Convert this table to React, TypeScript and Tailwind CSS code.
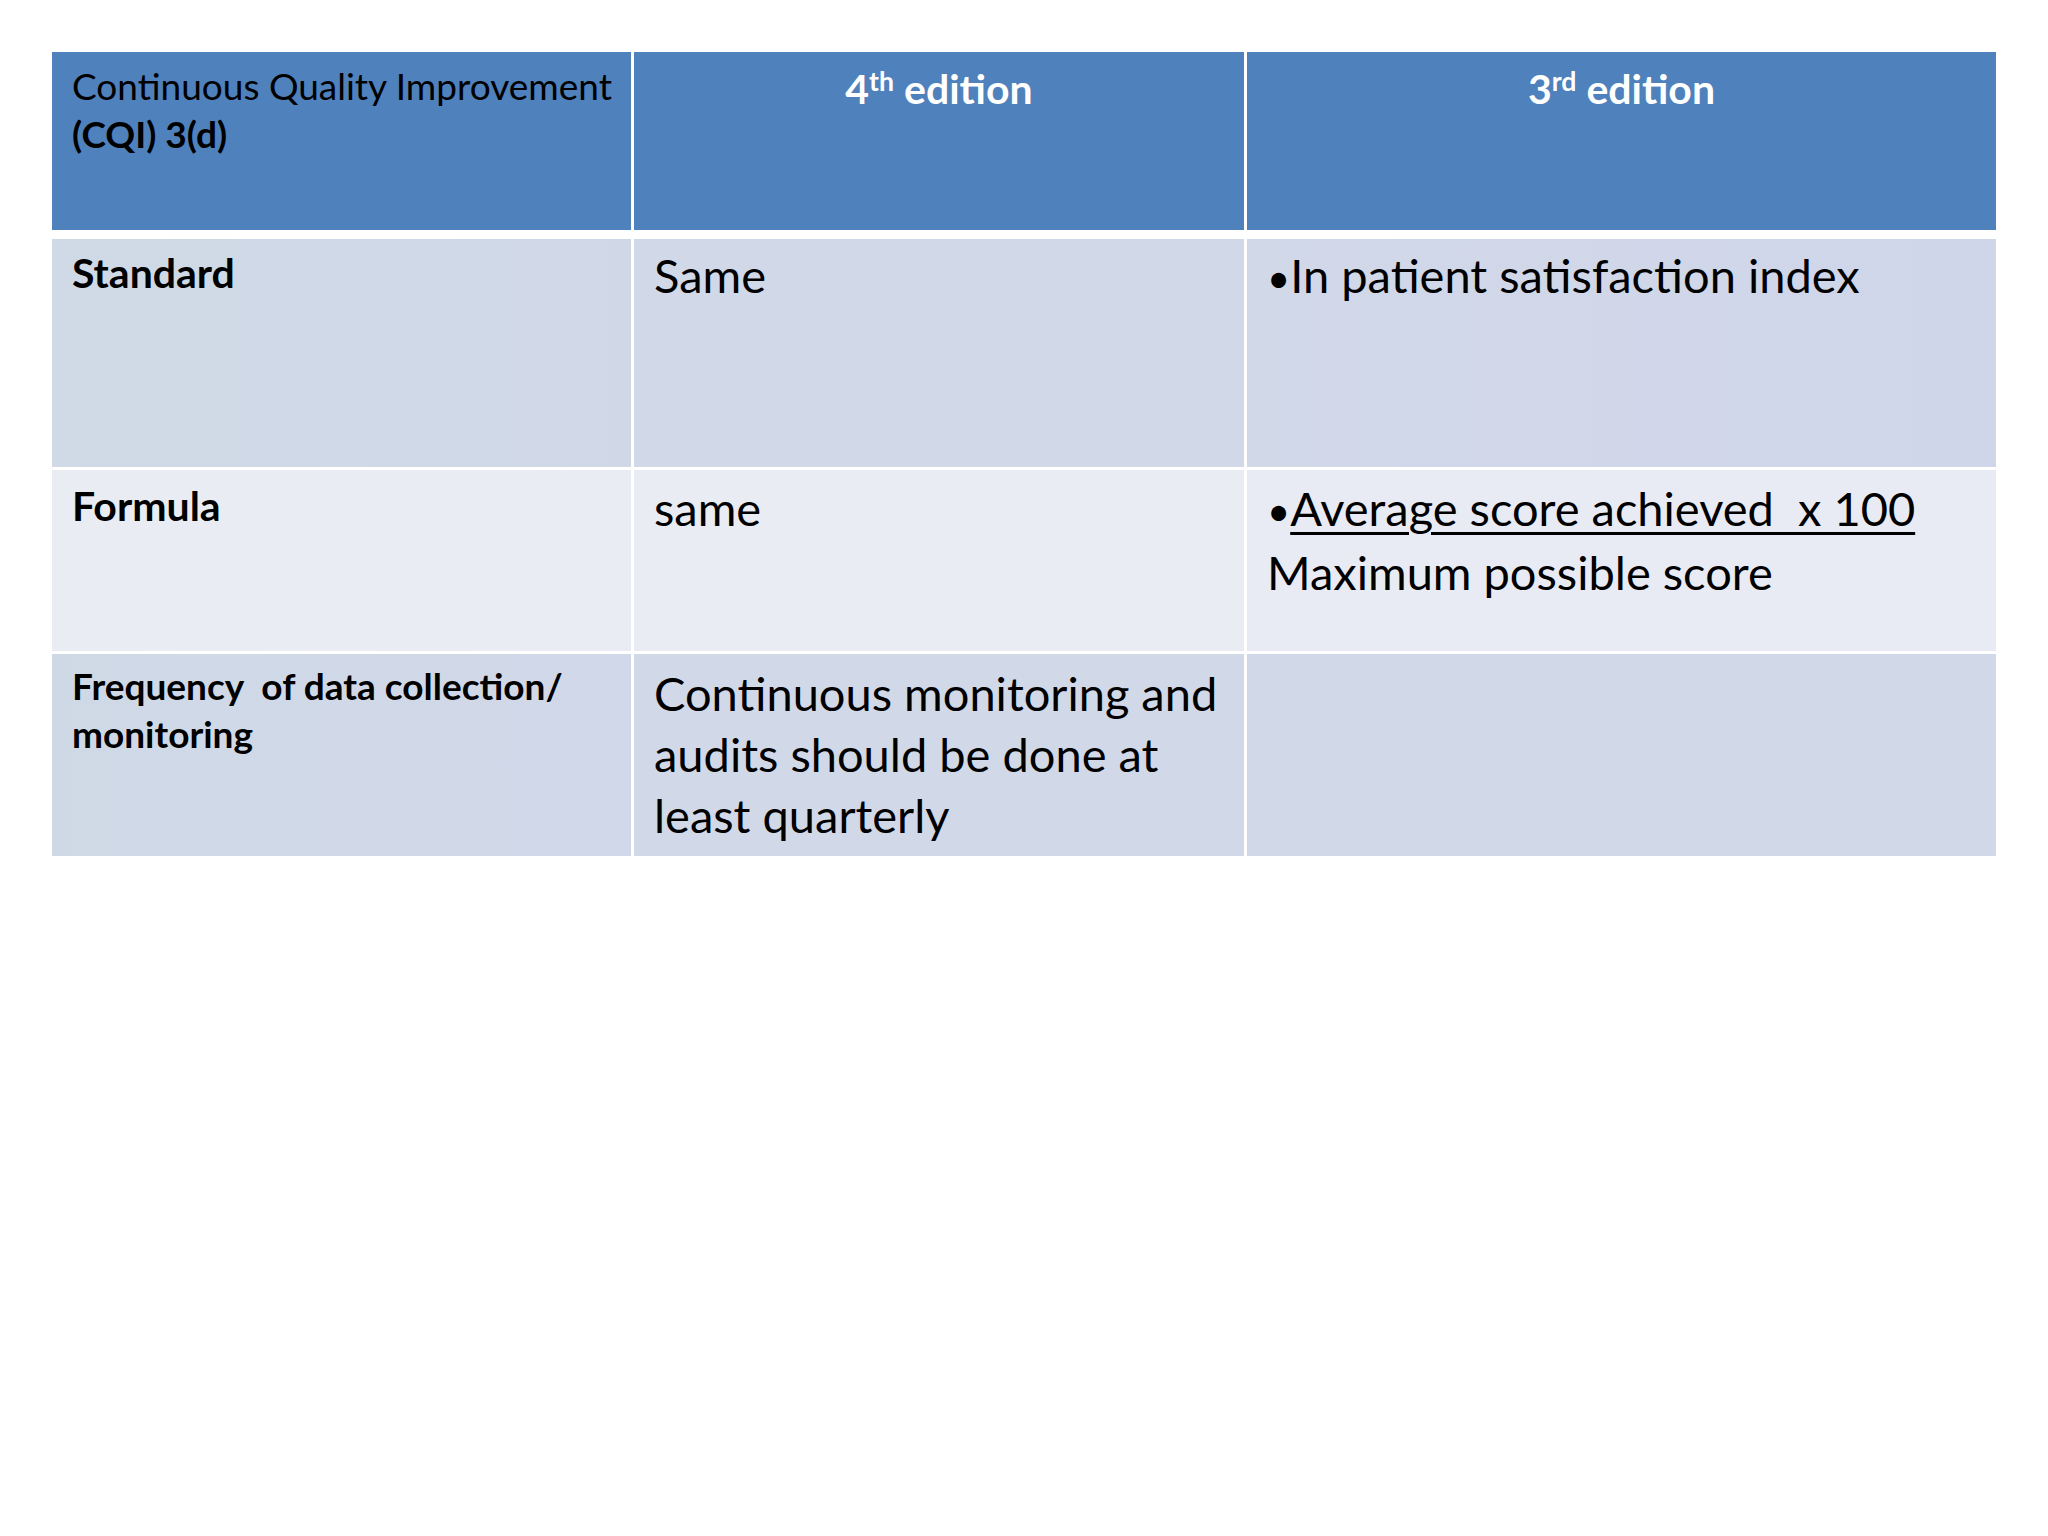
export default function App() {
  return (
    <div className="w-[2048px] h-[1536px] bg-white font-['Lato',sans-serif] text-black">
      <div className="pt-[52px] pl-[52px]">
        <div className="flex w-[1944px] flex-col">
          {/* Header row */}
          <div className="mb-[9px] grid h-[178px] grid-cols-[579px_610px_749px] gap-x-[3px]">
            <div className="bg-[#4f81bd] pl-[20px] pt-[10px] text-[37px] leading-[48px] whitespace-nowrap">
              <p>Continuous Quality Improvement</p>
              <p className="font-bold">(CQI) 3(d)</p>
            </div>
            <div className="bg-[#4f81bd] px-[20px] pt-[9px] text-center text-[41px] font-bold leading-[55px] text-white">
              4<sup className="text-[65%]">th</sup> edition
            </div>
            <div className="bg-[#4f81bd] px-[20px] pt-[9px] text-center text-[41px] font-bold leading-[55px] text-white">
              3<sup className="text-[65%]">rd</sup> edition
            </div>
          </div>

          {/* Standard */}
          <div className="mb-[3px] grid h-[228px] grid-cols-[579px_610px_749px] gap-x-[3px]">
            <div className="bg-gradient-to-r from-[#cfdae6] to-[#d0d8e8] px-[20px] pt-[6px] text-[41px] font-bold leading-[55px]">
              Standard
            </div>
            <div className="bg-[#d1d8e8] px-[20px] pt-[6px] text-[47px] leading-[61px]">Same</div>
            <div className="bg-gradient-to-r from-[#d1d8e8] to-[#d0d6ea] px-[20px] pt-[6px] text-[47px] leading-[61px]">
              <span className="text-[40px]">•</span>In patient satisfaction index
            </div>
          </div>

          {/* Formula */}
          <div className="mb-[3px] grid h-[181px] grid-cols-[579px_610px_749px] gap-x-[3px]">
            <div className="bg-[#e9edf3] px-[20px] pt-[8px] text-[41px] font-bold leading-[55px]">Formula</div>
            <div className="bg-[#e9ecf3] px-[20px] pt-[8px] text-[47px] leading-[61px]">same</div>
            <div className="bg-[#e9ebf4] px-[20px] pt-[8px] text-[47px] leading-[61px] whitespace-pre">
              <p>
                <span className="text-[40px]">•</span>
                <span className="underline decoration-[3px] underline-offset-[6px]">Average score achieved  x 100</span>
              </p>
              <p>Maximum possible score</p>
            </div>
          </div>

          {/* Frequency */}
          <div className="grid h-[202px] grid-cols-[579px_610px_749px] gap-x-[3px]">
            <div className="bg-gradient-to-r from-[#cfd9e6] to-[#d1d8e9] px-[20px] pt-[8px] text-[37px] font-bold leading-[48px] whitespace-pre">
              <p>Frequency  of data collection/</p>
              <p>monitoring</p>
            </div>
            <div className="bg-[#d1d8e8] px-[20px] pt-[9px] text-[47px] leading-[61px]">
              <p>Continuous monitoring and</p>
              <p>audits should be done at</p>
              <p>least quarterly</p>
            </div>
            <div className="bg-[#d1d8e8]" />
          </div>
        </div>
      </div>
    </div>
  );
}
